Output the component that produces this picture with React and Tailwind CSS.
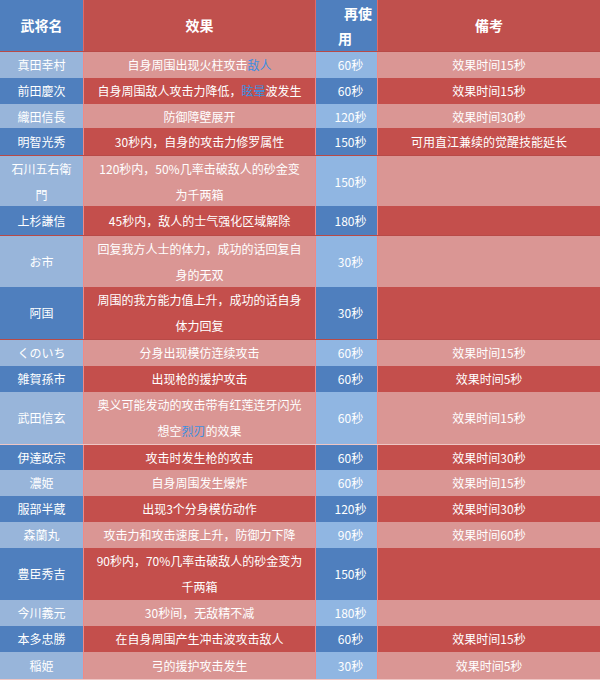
import React from 'react';

const B = ({ children }) => <span className="text-[#3d8fe0]">{children}</span>;

const rows = [
    { h: 'h-[26px]', name: ['真田幸村'], effect: [<>自身周围出现火柱攻击<B>敌人</B></>], cd: '60秒', note: '效果时间15秒' },
    { h: 'h-[26px]', name: ['前田慶次'], effect: [<>自身周围敌人攻击力降低，<B>眩晕</B>波发生</>], cd: '60秒', note: '效果时间15秒' },
    { h: 'h-[24px]', name: ['織田信長'], effect: ['防御障壁展开'], cd: '120秒', note: '效果时间30秒' },
    { h: 'h-[28px]', name: ['明智光秀'], effect: ['30秒内，自身的攻击力修罗属性'], cd: '150秒', note: '可用直江兼续的觉醒技能延长' },
    { h: 'h-[50px]', name: ['石川五右衛', '門'], effect: ['120秒内，50%几率击破敌人的砂金变', '为千两箱'], cd: '150秒', note: '' },
    { h: 'h-[30px]', name: ['上杉謙信'], effect: ['45秒内，敌人的士气强化区域解除'], cd: '180秒', note: '' },
    { h: 'h-[51px]', name: ['お市'], effect: ['回复我方人士的体力，成功的话回复自', '身的无双'], cd: '30秒', note: '' },
    { h: 'h-[53px]', name: ['阿国'], effect: ['周围的我方能力值上升，成功的话自身', '体力回复'], cd: '30秒', note: '' },
    { h: 'h-[26px]', name: ['くのいち'], effect: ['分身出现模仿连续攻击'], cd: '60秒', note: '效果时间15秒' },
    { h: 'h-[26px]', name: ['雑賀孫市'], effect: ['出现枪的援护攻击'], cd: '60秒', note: '效果时间5秒' },
    { h: 'h-[53px]', name: ['武田信玄'], effect: ['奥义可能发动的攻击带有红莲连牙闪光', <>想空<B>烈刃</B>的效果</>], cd: '60秒', note: '效果时间15秒' },
    { h: 'h-[25px]', name: ['伊達政宗'], effect: ['攻击时发生枪的攻击'], cd: '60秒', note: '效果时间30秒' },
    { h: 'h-[26px]', name: ['濃姫'], effect: ['自身周围发生爆炸'], cd: '60秒', note: '效果时间15秒' },
    { h: 'h-[26px]', name: ['服部半蔵'], effect: ['出现3个分身模仿动作'], cd: '120秒', note: '效果时间30秒' },
    { h: 'h-[26px]', name: ['森蘭丸'], effect: ['攻击力和攻击速度上升，防御力下降'], cd: '90秒', note: '效果时间60秒' },
    { h: 'h-[52px]', name: ['豊臣秀吉'], effect: ['90秒内，70%几率击破敌人的砂金变为', '千两箱'], cd: '150秒', note: '' },
    { h: 'h-[26px]', name: ['今川義元'], effect: ['30秒间，无敌精不减'], cd: '180秒', note: '' },
    { h: 'h-[26px]', name: ['本多忠勝'], effect: ['在自身周围产生冲击波攻击敌人'], cd: '60秒', note: '效果时间15秒' },
    { h: 'h-[28px]', name: ['稲姫'], effect: ['弓的援护攻击发生'], cd: '30秒', note: '效果时间5秒' },
];

const Lines = ({ lines }) => (
    <div className="flex flex-col items-center leading-[26px]">
        {lines.map((l, i) => (
            <span key={i} className="whitespace-nowrap">{l}</span>
        ))}
    </div>
);

export default function App() {
    return (
        <div
            className="w-[600px] h-[680px] overflow-hidden bg-[#e8807c] text-[12px] text-white"
            style={{ fontFamily: '"Noto Sans CJK SC", "Noto Sans CJK JP", sans-serif' }}
        >
            {/* Header */}
            <div className="grid grid-cols-[83px_1px_231px_1px_61px_1px_1fr] h-[52px] border-b border-[#b84a47] font-bold text-[14px]">
                <div className="bg-[#4f7fbe] flex items-center justify-center">武将名</div>
                <div className="bg-[#e06a66]" />
                <div className="bg-[#c0504d] flex items-center justify-center">效果</div>
                <div className="bg-[#e06a66]" />
                <div className="bg-[#4f7fbe] flex flex-col justify-center leading-[25px] pl-[22px]">
                    <span className="pl-[6px]">再使</span>
                    <span>用</span>
                </div>
                <div className="bg-[#e06a66]" />
                <div className="bg-[#c0504d] flex items-center justify-center">備考</div>
            </div>

            {rows.map((r, i) => {
                const light = i % 2 === 0;
                return (
                    <div
                        key={i}
                        className={`grid grid-cols-[83px_1px_231px_1px_61px_1px_1fr] ${r.h} ${light ? 'border-b border-[#efc6c4]' : 'border-b border-[#b84a47]'}`}
                    >
                        <div className={`${light ? 'bg-[#98b5da]' : 'bg-[#4f7fbe]'} flex items-center justify-center`}>
                            <Lines lines={r.name} />
                        </div>
                        <div className="bg-[#f08a86]" />
                        <div className={`${light ? 'bg-[#da9694]' : 'bg-[#c44f4c]'} flex items-center justify-center`}>
                            <Lines lines={r.effect} />
                        </div>
                        <div className="bg-[#f08a86]" />
                        <div className={`${light ? 'bg-[#90b6e2]' : 'bg-[#4f7fbe]'} flex items-center justify-center pl-[8px]`}>
                            {r.cd}
                        </div>
                        <div className="bg-[#f08a86]" />
                        <div className={`${light ? 'bg-[#da9694]' : 'bg-[#c44f4c]'} flex items-center justify-center`}>
                            {r.note}
                        </div>
                    </div>
                );
            })}
        </div>
    );
}
